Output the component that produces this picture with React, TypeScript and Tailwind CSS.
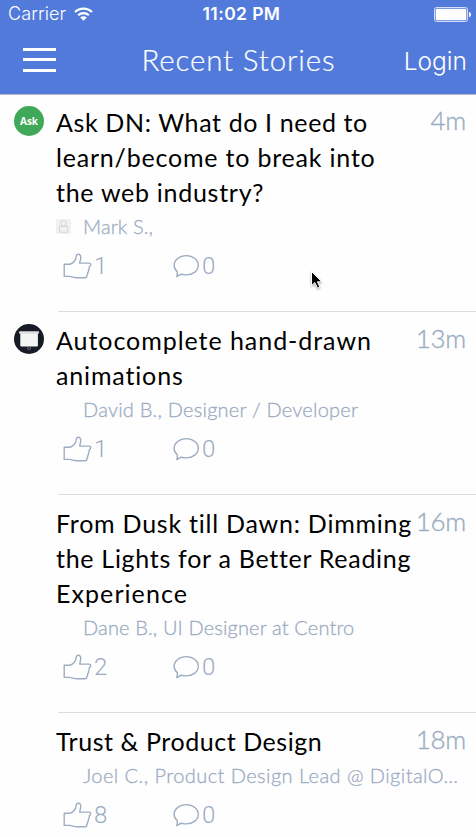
import type { ReactNode } from "react";

type Line = { text: string; tracking: string };
type Story = {
  title: Line[];
  age: string;
  author: Line;
  votes: number;
  comments: number;
  badge?: ReactNode;
  avatar?: ReactNode;
};

function AskBadge() {
  return (
    <div className="flex h-[30px] w-[30px] items-center justify-center rounded-full bg-[#3fa959] font-['Open_Sans',sans-serif] text-[10px] font-bold leading-none tracking-[-0.1px] text-white">
      Ask
    </div>
  );
}

function ScreenBadge() {
  return (
    <svg className="block h-[30px] w-[30px]" viewBox="0 0 30 30">
      <circle cx="15" cy="15" r="15" fill="#171b26" />
      <rect x="6.3" y="8.6" width="17.6" height="14" rx="1" fill="#f4f4f5" />
      <rect x="5" y="7.3" width="20" height="2.4" rx="1" fill="#dcdfe1" />
      <circle cx="15" cy="24.2" r="1.5" fill="none" stroke="#70757c" strokeWidth="0.8" />
    </svg>
  );
}

function Avatar() {
  return (
    <svg className="block h-[15px] w-[15px]" viewBox="0 0 15 15" fill="none" stroke="#d3d7da" strokeWidth="1">
      <rect width="15" height="15" rx="1.5" fill="#f1f1f1" stroke="none" />
      <circle cx="7.5" cy="4.4" r="2.8" />
      <path d="M3.5 13.2V7.5h8v5.7z" />
    </svg>
  );
}

function ThumbIcon() {
  return (
    <svg className="block h-[26px] w-[29px]" viewBox="0 0 29 26" fill="none" stroke="#9dadc1" strokeWidth="1.4" strokeLinejoin="round">
      <path d="M1.2 11.2H6.6C9.5 11 13 7.2 13 4.6C13 2.4 13.8 1.3 15.3 1.3C17.2 1.3 17.9 2.9 17.7 4.8C17.6 6.8 16.9 8.2 16.7 10.1H25.6C27.4 10 28 11 27.6 12.2C27.3 13.1 26.6 13.3 26.2 14C26.6 15.3 26.2 16.1 25.5 16.9C25.9 18 25.4 18.9 24.7 19.7C25 20.9 24.5 21.5 24 22.2C23.9 23.8 23.4 24.8 22 24.8H14C11 24.8 9 23.4 6.4 23.4H1.2Z" />
    </svg>
  );
}

function BubbleIcon() {
  return (
    <svg className="block h-[24px] w-[27px]" viewBox="0 0 27 24" fill="none" stroke="#9dadc1" strokeWidth="1.4" strokeLinejoin="round">
      <path d="M13.2 1.6C20 1.6 25.3 5.9 25.3 11.3S20 20.9 13.2 20.9C11.4 20.9 9.8 20.6 8.3 20.1C6.8 21.1 5.2 21.7 3.8 22.6C4.3 21.2 4.5 19.3 4.3 17.8C2.3 16.1 1.1 13.9 1.1 11.3C1.1 5.9 6.5 1.6 13.2 1.6Z" />
    </svg>
  );
}

const stories: Story[] = [
  {
    title: [
      { text: "Ask DN: What do I need to", tracking: "tracking-[0.62px]" },
      { text: "learn/become to break into", tracking: "tracking-[0.8px]" },
      { text: "the web industry?", tracking: "tracking-[0.72px]" },
    ],
    age: "4m",
    author: { text: "Mark S.,", tracking: "tracking-[0.1px]" },
    votes: 1,
    comments: 0,
    badge: <AskBadge />,
    avatar: <Avatar />,
  },
  {
    title: [
      { text: "Autocomplete hand-drawn", tracking: "tracking-[0.95px]" },
      { text: "animations", tracking: "tracking-[0.85px]" },
    ],
    age: "13m",
    author: { text: "David B., Designer / Developer", tracking: "tracking-[0.23px]" },
    votes: 1,
    comments: 0,
    badge: <ScreenBadge />,
  },
  {
    title: [
      { text: "From Dusk till Dawn: Dimming", tracking: "tracking-[0.76px]" },
      { text: "the Lights for a Better Reading", tracking: "tracking-[0.71px]" },
      { text: "Experience", tracking: "tracking-[1.07px]" },
    ],
    age: "16m",
    author: { text: "Dane B., UI Designer at Centro", tracking: "tracking-[0.15px]" },
    votes: 2,
    comments: 0,
  },
  {
    title: [{ text: "Trust & Product Design", tracking: "tracking-[0.56px]" }],
    age: "18m",
    author: { text: "Joel C., Product Design Lead @ DigitalO…", tracking: "tracking-[0.45px]" },
    votes: 8,
    comments: 0,
  },
];

function StoryRow({ story }: { story: Story }) {
  return (
    <article className="flex pl-[14px]">
      <div className="w-[42px] shrink-0 pt-3">{story.badge}</div>
      <div className="relative min-w-0 flex-1 pb-[22px] pt-[11px] after:absolute after:bottom-0 after:left-[2px] after:right-0 after:h-px after:bg-[#dcdde0]">
        <div className="flex justify-between pr-[10px]">
          <h2 className="text-[25px] font-normal leading-[35px] text-black">
            {story.title.map((line) => (
              <span key={line.text} className={`block whitespace-nowrap ${line.tracking}`}>
                {line.text}
              </span>
            ))}
          </h2>
          <span className="-ml-4 text-[26px] font-light leading-[31px] tracking-[-0.3px] text-[#9cacc2] [-webkit-text-stroke:0.35px_#9cacc2]">
            {story.age}
          </span>
        </div>
        <div className="flex h-8 items-center">
          <div className="w-[27px] shrink-0 pt-px">{story.avatar}</div>
          <span
            className={`whitespace-nowrap text-[20px] font-light leading-8 text-[#9cacc2] [-webkit-text-stroke:0.3px_#9cacc2] ${story.author.tracking}`}
          >
            {story.author.text}
          </span>
        </div>
        <div className="flex h-[48px] items-center pl-[7px] font-['Roboto',sans-serif] text-[24px] font-light leading-none text-[#9aabc1]">
          <div className="flex w-[110px] items-center gap-[2px]">
            <ThumbIcon />
            <span>{story.votes}</span>
          </div>
          <div className="flex items-center gap-[2px]">
            <BubbleIcon />
            <span>{story.comments}</span>
          </div>
        </div>
      </div>
    </article>
  );
}

export default function App() {
  return (
    <div className="h-[837px] w-[476px] overflow-hidden bg-[#fefefe] font-['Lato',sans-serif]">
      <header className="flex h-[94px] flex-col bg-[#527adb] text-white shadow-[0_1px_0_#b9b6c4]">
        <div className="grid h-7 grid-cols-3 items-center pl-[8px] pr-[5px] font-['Inter',sans-serif] text-[18px] leading-none">
          <div className="flex items-center gap-[8px]">
            <span className="font-light tracking-[0.1px]">Carrier</span>
            <svg className="h-[14px] w-[19px]" viewBox="0 0 19 14" fill="none" stroke="white" strokeWidth="2.2">
              <path d="M1 5C5.7 .4 13.3 .4 18 5M4.2 8.3C7.2 5.5 11.8 5.5 14.8 8.3" />
              <path d="M6.2 10.4C8.1 8.7 10.9 8.7 12.8 10.4L9.5 13.8Z" fill="white" stroke="none" />
            </svg>
          </div>
          <span className="whitespace-nowrap pl-[4px] text-center text-[17.5px] font-semibold tracking-[0.4px]">11:02 PM</span>
          <svg className="h-[15px] w-[37px] justify-self-end" viewBox="0 0 37 15">
            <rect x="0.5" y="0.5" width="33" height="14" rx="2" fill="none" stroke="#d5def6" />
            <rect x="1.7" y="1.7" width="30.6" height="11.6" rx="1" fill="white" />
            <path d="M35 5C36.4 5.2 37 6.2 37 7.5S36.4 9.8 35 10Z" fill="white" />
          </svg>
        </div>
        <div className="flex h-[63px] items-center justify-between pl-[23px] pr-[9px]">
          <div className="flex w-[33px] flex-col gap-[7.5px]">
            <span className="h-[3px] bg-white" />
            <span className="h-[3px] bg-white" />
            <span className="h-[3px] bg-white" />
          </div>
          <h1 className="ml-[17px] whitespace-nowrap text-[29.5px] font-light leading-none tracking-[0.85px] [-webkit-text-stroke:0.2px_white]">
            Recent Stories
          </h1>
          <span className="pt-[3px] font-['Inter',sans-serif] text-[24.5px] font-light leading-none">Login</span>
        </div>
      </header>
      <main>
        {stories.map((story) => (
          <StoryRow key={story.title[0].text} story={story} />
        ))}
      </main>
      <svg
        className="absolute left-[310px] top-[270px] h-[20px] w-[13px] overflow-visible drop-shadow-[0_1px_1px_rgba(0,0,0,0.35)]"
        viewBox="0 0 13 20"
      >
        <path d="M1.5 1.5V15.5L4.9 12.6L7.5 18.2L9.8 17.1L7.4 11.8H11.8Z" fill="black" stroke="white" strokeWidth="1" />
      </svg>
    </div>
  );
}
